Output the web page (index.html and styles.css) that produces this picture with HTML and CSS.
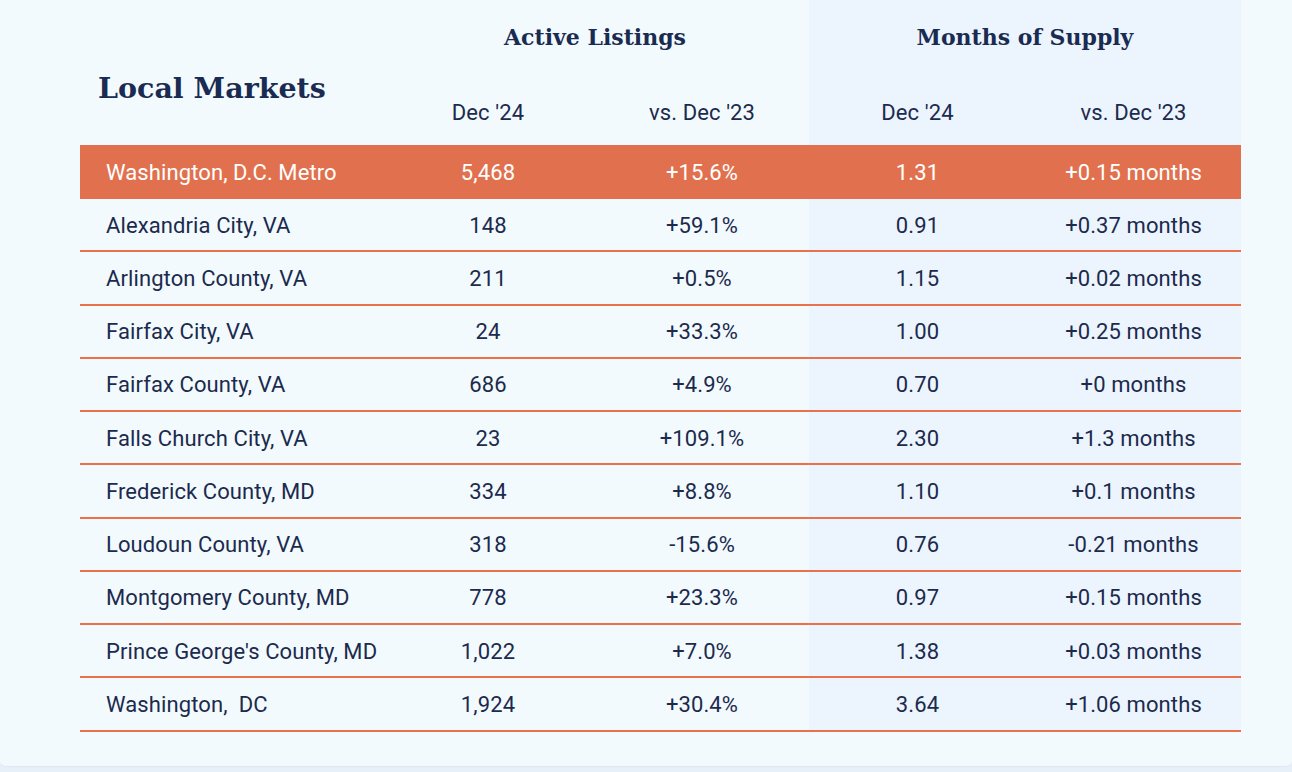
FILE: index.html
```html
<!DOCTYPE html>
<html>
<head>
<meta charset="utf-8">
<link rel="stylesheet" href="styles.css">
</head>
<body>
<div class="card">
  <div class="grid">
    <div class="title">Local Markets</div>
    <div class="group span2">Active Listings</div>
    <div class="group span2 tint">Months of Supply</div>
    <div class="sub">Dec '24</div>
    <div class="sub">vs. Dec '23</div>
    <div class="sub tint">Dec '24</div>
    <div class="sub tint">vs. Dec '23</div>

    <div class="row hl">
      <div class="c name">Washington, D.C. Metro</div><div class="c">5,468</div><div class="c">+15.6%</div><div class="c">1.31</div><div class="c">+0.15 months</div>
    </div>
    <div class="row">
      <div class="c name">Alexandria City, VA</div><div class="c">148</div><div class="c">+59.1%</div><div class="c tint">0.91</div><div class="c tint">+0.37 months</div>
    </div>
    <div class="row">
      <div class="c name">Arlington County, VA</div><div class="c">211</div><div class="c">+0.5%</div><div class="c tint">1.15</div><div class="c tint">+0.02 months</div>
    </div>
    <div class="row">
      <div class="c name">Fairfax City, VA</div><div class="c">24</div><div class="c">+33.3%</div><div class="c tint">1.00</div><div class="c tint">+0.25 months</div>
    </div>
    <div class="row">
      <div class="c name">Fairfax County, VA</div><div class="c">686</div><div class="c">+4.9%</div><div class="c tint">0.70</div><div class="c tint">+0 months</div>
    </div>
    <div class="row">
      <div class="c name">Falls Church City, VA</div><div class="c">23</div><div class="c">+109.1%</div><div class="c tint">2.30</div><div class="c tint">+1.3 months</div>
    </div>
    <div class="row">
      <div class="c name">Frederick County, MD</div><div class="c">334</div><div class="c">+8.8%</div><div class="c tint">1.10</div><div class="c tint">+0.1 months</div>
    </div>
    <div class="row">
      <div class="c name">Loudoun County, VA</div><div class="c">318</div><div class="c">-15.6%</div><div class="c tint">0.76</div><div class="c tint">-0.21 months</div>
    </div>
    <div class="row">
      <div class="c name">Montgomery County, MD</div><div class="c">778</div><div class="c">+23.3%</div><div class="c tint">0.97</div><div class="c tint">+0.15 months</div>
    </div>
    <div class="row">
      <div class="c name">Prince George's County, MD</div><div class="c">1,022</div><div class="c">+7.0%</div><div class="c tint">1.38</div><div class="c tint">+0.03 months</div>
    </div>
    <div class="row">
      <div class="c name">Washington,&nbsp; DC</div><div class="c">1,924</div><div class="c">+30.4%</div><div class="c tint">3.64</div><div class="c tint">+1.06 months</div>
    </div>
  </div>
</div>
</body>
</html>
```
FILE: styles.css
```css
html, body {
  margin: 0;
  padding: 0;
}
body {
  background: #e7f0f8;
  width: 1292px;
  height: 772px;
  overflow: hidden;
  font-family: Roboto, "Liberation Sans", sans-serif;
  color: #1c2a4d;
}
.card {
  box-sizing: border-box;
  width: 1292px;
  height: 767px;
  background: #f2fafe;
  border-bottom: 1px solid #dfe8f1;
  border-radius: 0 0 6px 6px;
  padding-left: 80px;
}
.grid {
  display: grid;
  grid-template-columns: 301px 214px 214px 217px 215px;
  grid-template-rows: 74px 71px;
  width: 1161px;
}
.title {
  grid-row: 1 / 3;
  font-family: "DejaVu Serif", serif;
  font-weight: bold;
  font-size: 28.5px;
  color: #1a2b52;
  padding: 70px 0 0 18px;
  line-height: 36px;
}
.group {
  grid-column: span 2;
  display: flex;
  align-items: center;
  justify-content: center;
  font-family: "DejaVu Serif", serif;
  font-weight: bold;
  font-size: 22px;
  color: #1a2b52;
}
.sub {
  display: flex;
  align-items: center;
  justify-content: center;
  padding-top: 5px;
  font-size: 22px;
  letter-spacing: 0.1px;
}
.tint {
  background: #ecf5fd;
}
.row {
  grid-column: 1 / -1;
  display: grid;
  grid-template-columns: subgrid;
  height: 53.25px;
  box-sizing: border-box;
  border-bottom: 2px solid #e9714c;
}
.row.hl {
  height: 54px;
  background: #e1714e;
  color: #ffffff;
  border-bottom: none;
}
.c {
  display: flex;
  align-items: center;
  justify-content: center;
  font-size: 22px;
  letter-spacing: 0.1px;
  padding-top: 1px;
}
.c.name {
  justify-content: flex-start;
  padding-left: 26px;
}
```
